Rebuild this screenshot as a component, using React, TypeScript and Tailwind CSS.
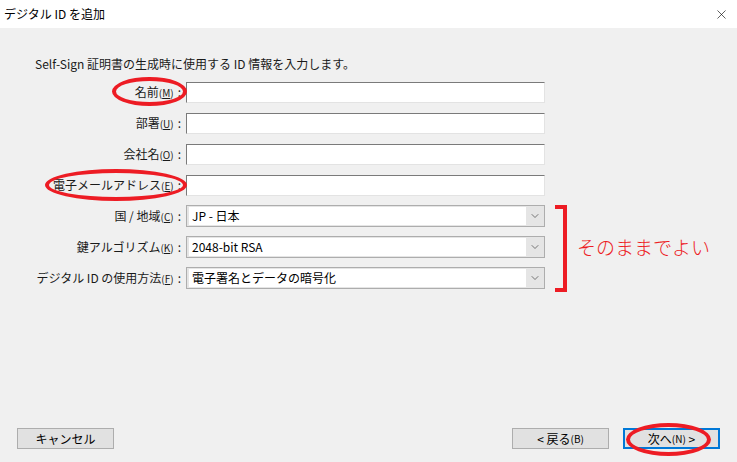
import React from 'react';
import { ChevronDown, X } from 'lucide-react';

const font = { fontFamily: '"Noto Sans CJK JP", "Noto Sans", sans-serif' };

const Label = ({ text, k }: { text: string; k: string }) => (
    <div className="flex items-center justify-end h-[22px] text-[12px] text-[#1a1a1a] pr-[5px] whitespace-nowrap">
        <span>{text}</span>
        <span className="text-[10px]">(<span className="underline">{k}</span>)</span>
        <span className="ml-[4px]">:</span>
    </div>
);

const TextBox = () => (
    <div className="h-[22px] flex items-center">
        <div className="h-[21px] w-full bg-white border border-t-[#7a7a7a] border-l-[#7a7a7a] border-r-[#e3e3e3] border-b-[#e3e3e3]" />
    </div>
);

const Select = ({ value }: { value: string }) => (
    <div className="h-[22px] w-full flex items-center bg-[#e5e5e5] border border-[#adadad]">
        <div className="flex-1 h-[18px] ml-[2px] bg-white flex items-center pl-[3px] text-[12px] text-black">{value}</div>
        <div className="w-[18px] flex justify-center">
            <ChevronDown size={12} strokeWidth={1.4} color="#444" />
        </div>
    </div>
);

const rows: { label: string; k: string; select?: string }[] = [
    { label: '名前', k: 'M' },
    { label: '部署', k: 'U' },
    { label: '会社名', k: 'O' },
    { label: '電子メールアドレス', k: 'E' },
    { label: '国 / 地域', k: 'C', select: 'JP - 日本' },
    { label: '鍵アルゴリズム', k: 'K', select: '2048-bit RSA' },
    { label: 'デジタル ID の使用方法', k: 'F', select: '電子署名とデータの暗号化' },
];

const Btn = ({ children, primary }: { children: React.ReactNode; primary?: boolean }) => (
    <div
        className={
            'w-[97px] h-[21px] flex items-center justify-center bg-[#e1e1e1] text-[12px] text-black ' +
            (primary ? 'border-2 border-[#0078d7]' : 'border border-[#adadad]')
        }
    >
        {children}
    </div>
);

export default function App() {
    return (
        <div className="relative w-[737px] h-[462px] flex flex-col bg-[#f0f0f0] overflow-hidden" style={font}>
            {/* title bar */}
            <div className="h-[28px] bg-white flex items-center justify-between pl-[4px] pr-[8px]">
                <span className="text-[12px] text-black">デジタル ID を追加</span>
                <X size={15} strokeWidth={1} color="#000" />
            </div>

            <div className="flex-1 flex flex-col">
                <div className="pl-[35px] pt-[29px] text-[12px] leading-[14px] text-[#1a1a1a]">
                    Self-Sign 証明書の生成時に使用する ID 情報を入力します。
                </div>

                <div className="mt-[10px] ml-[20px] grid grid-cols-[166px_359px] gap-y-[9px]">
                    {rows.map((r) => (
                        <React.Fragment key={r.k}>
                            <Label text={r.label} k={r.k} />
                            {r.select ? <Select value={r.select} /> : <TextBox />}
                        </React.Fragment>
                    ))}
                </div>

                <div className="mt-auto mb-[13px] flex items-center px-[17px]">
                    <Btn>キャンセル</Btn>
                    <div className="flex-1" />
                    <Btn>
                        &lt; 戻る<span className="text-[10px]">(B)</span>
                    </Btn>
                    <div className="w-[14px]" />
                    <Btn primary>
                        次へ<span className="text-[10px]">(N)</span>&nbsp;&gt;
                    </Btn>
                </div>
            </div>

            {/* red annotations */}
            <div className="absolute left-[112px] top-[77px] w-[75px] h-[29px] rounded-[50%] border-[4px] border-[#ed1c24]" />
            <div className="absolute left-[45px] top-[169px] w-[142px] h-[32px] rounded-[50%] border-[4px] border-[#ed1c24]" />
            <div className="absolute left-[626px] top-[423px] w-[85px] h-[33px] rounded-[50%] border-[4px] border-[#ed1c24]" />
            <div className="absolute left-[555px] top-[205px] w-[12px] h-[87px] border-[4px] border-l-0 border-[#ed1c24]" />
            <div className="absolute left-[577px] top-[233px] text-[19px] font-light text-[#ed1c24]">そのままでよい</div>
        </div>
    );
}
